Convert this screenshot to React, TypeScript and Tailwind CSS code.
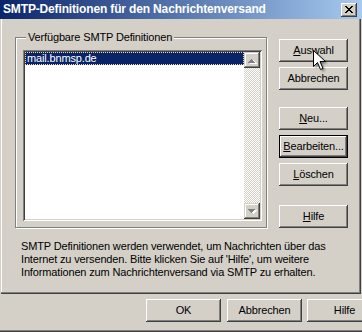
export default function App() {
  const btn =
    "shrink-0 h-[23px] flex items-center justify-center bg-[#d4d0c8] shadow-[inset_-1px_-1px_0_#404040,inset_1px_1px_0_#fff,inset_-2px_-2px_0_#808080,inset_2px_2px_0_#d4d0c8]";
  const sbtn =
    "w-[16px] h-[16px] shrink-0 bg-[#d4d0c8] shadow-[inset_-1px_-1px_0_#404040,inset_1px_1px_0_#d4d0c8,inset_-2px_-2px_0_#808080,inset_2px_2px_0_#fff]";
  return (
    <div className="relative w-[362px] h-[332px] overflow-hidden bg-[#d4d0c8] flex flex-col font-['Liberation_Sans',Arial,sans-serif] text-[11px] leading-[13px] tracking-[-0.15px] text-black">
      {/* Title bar */}
      <div className="h-[19px] shrink-0 flex items-start justify-between bg-[linear-gradient(to_right,#0a246a,#a6caf0)] pl-[3px] pr-[5px]">
        <span className="text-white font-bold text-[12px] leading-[19px] tracking-[-0.15px]">
          SMTP-Definitionen für den Nachrichtenversand
        </span>
        <div className="mt-[3px] w-[16px] h-[14px] bg-[#d4d0c8] shadow-[inset_-1px_-1px_0_#404040,inset_1px_1px_0_#fff,inset_-2px_-2px_0_#808080,inset_2px_2px_0_#d4d0c8] flex items-center justify-center">
          <svg width="16" height="14" viewBox="0 0 16 14" shapeRendering="crispEdges">
            <path d="M4 3h2v1h1v1h2v-1h1v-1h2v1h-1v1h-1v1h-1v1h1v1h1v1h1v1h-2v-1h-1v-1h-2v1h-1v1h-2v-1h1v-1h1v-1h1v-1h-1v-1h-1v-1h-1z" fill="#000" />
          </svg>
        </div>
      </div>

      {/* Panel */}
      <div className="ml-px w-[360px] h-[275px] shrink-0 flex flex-col shadow-[inset_-1px_-1px_0_#404040,inset_-2px_-2px_0_#808080,inset_1px_0_0_#fff]">
        <div className="flex items-start pt-[18px]">
          {/* Group box */}
          <div className="relative ml-[14px] w-[252px] h-[191px] shrink-0 border border-[#808080] shadow-[inset_1px_1px_0_#fff,1px_1px_0_#fff] pl-[7px] pt-[12px]">
            <span className="absolute left-[10px] top-[-7px] px-[2px] bg-[#d4d0c8] whitespace-nowrap">
              Verfügbare SMTP Definitionen
            </span>
            {/* List box */}
            <div className="w-[239px] h-[171px] bg-white p-[2px] flex shadow-[inset_1px_1px_0_#808080,inset_-1px_-1px_0_#fff,inset_2px_2px_0_#404040,inset_-2px_-2px_0_#d4d0c8]">
              <div className="flex-1">
                <div className="h-[13px] bg-[#0a246a] text-white border border-dotted border-[#f5db95] pl-[1px] leading-[11px] whitespace-nowrap">
                  mail.bnmsp.de
                </div>
              </div>
              <div className="w-[16px] flex flex-col">
                <div className={sbtn}>
                  <svg width="16" height="16" viewBox="0 0 16 16" shapeRendering="crispEdges">
                    <path d="M5 10h7v1h-7z M6 9h5v1h-5z M7 8h3v1h-3z M8 7h1v1h-1z" fill="#fff" transform="translate(1,1)" />
                    <path d="M4 10h7v1h-7z M5 9h5v1h-5z M6 8h3v1h-3z M7 7h1v1h-1z" fill="#808080" />
                  </svg>
                </div>
                <div className="flex-1 bg-[repeating-conic-gradient(#d4d0c8_0%_25%,#ffffff_0%_50%)] bg-[length:2px_2px]" />
                <div className={sbtn}>
                  <svg width="16" height="16" viewBox="0 0 16 16" shapeRendering="crispEdges">
                    <path d="M5 6h7v1h-7z M6 7h5v1h-5z M7 8h3v1h-3z M8 9h1v1h-1z" fill="#fff" transform="translate(1,1)" />
                    <path d="M4 6h7v1h-7z M5 7h5v1h-5z M6 8h3v1h-3z M7 9h1v1h-1z" fill="#808080" />
                  </svg>
                </div>
              </div>
            </div>
          </div>

          {/* Right buttons */}
          <div className="ml-[12px] mt-[2px] w-[69px] flex flex-col">
            <div className={btn}>
              <span><u>A</u>uswahl</span>
            </div>
            <div className={btn + " mt-[5px]"}>
              <span>Abbrechen</span>
            </div>
            <div className={btn + " mt-[17px]"}>
              <span><u>N</u>eu...</span>
            </div>
            <div className="mt-[5px] h-[23px] shrink-0 flex items-center justify-center bg-[#d4d0c8] border border-black shadow-[inset_-1px_-1px_0_#404040,inset_1px_1px_0_#fff,inset_-2px_-2px_0_#808080]">
              <span><u>B</u>earbeiten...</span>
            </div>
            <div className={btn + " mt-[5px]"}>
              <span><u>L</u>öschen</span>
            </div>
            <div className={btn + " mt-[19px]"}>
              <span><u>H</u>ilfe</span>
            </div>
          </div>
        </div>

        <p className="mt-[12px] pl-[20px] whitespace-nowrap">
          SMTP Definitionen werden verwendet, um Nachrichten über das
          <br />
          Internet zu versenden. Bitte klicken Sie auf 'Hilfe', um weitere
          <br />
          Informationen zum Nachrichtenversand via SMTP zu erhalten.
        </p>
      </div>

      {/* Footer */}
      <div className="mt-[5px] flex pl-[146px]">
        <div className={btn + " w-[75px]"}>OK</div>
        <div className={btn + " w-[75px] ml-[6px]"}>Abbrechen</div>
        <div className={btn + " w-[75px] ml-[5px]"}>Hilfe</div>
      </div>
      <div className="mt-auto h-[2px] shrink-0 border-t border-t-[#808080] border-b border-b-[#404040]" />

      {/* Mouse cursor */}
      <svg className="absolute left-[312px] top-[49px]" width="20" height="26" viewBox="0 0 20 26">
        <defs>
          <filter id="cs" x="-50%" y="-50%" width="200%" height="200%">
            <feGaussianBlur stdDeviation="1" />
          </filter>
        </defs>
        <path d="M3.5 3.5v16l4-4 3 7 2.5-1-3-7h5.5z" fill="rgba(0,0,0,0.45)" filter="url(#cs)" />
        <path d="M1.5 1.5v16l4-4 3 7 2.5-1-3-7h5.5z" fill="#fff" stroke="#000" strokeWidth="1" strokeLinejoin="miter" />
      </svg>
    </div>
  );
}
